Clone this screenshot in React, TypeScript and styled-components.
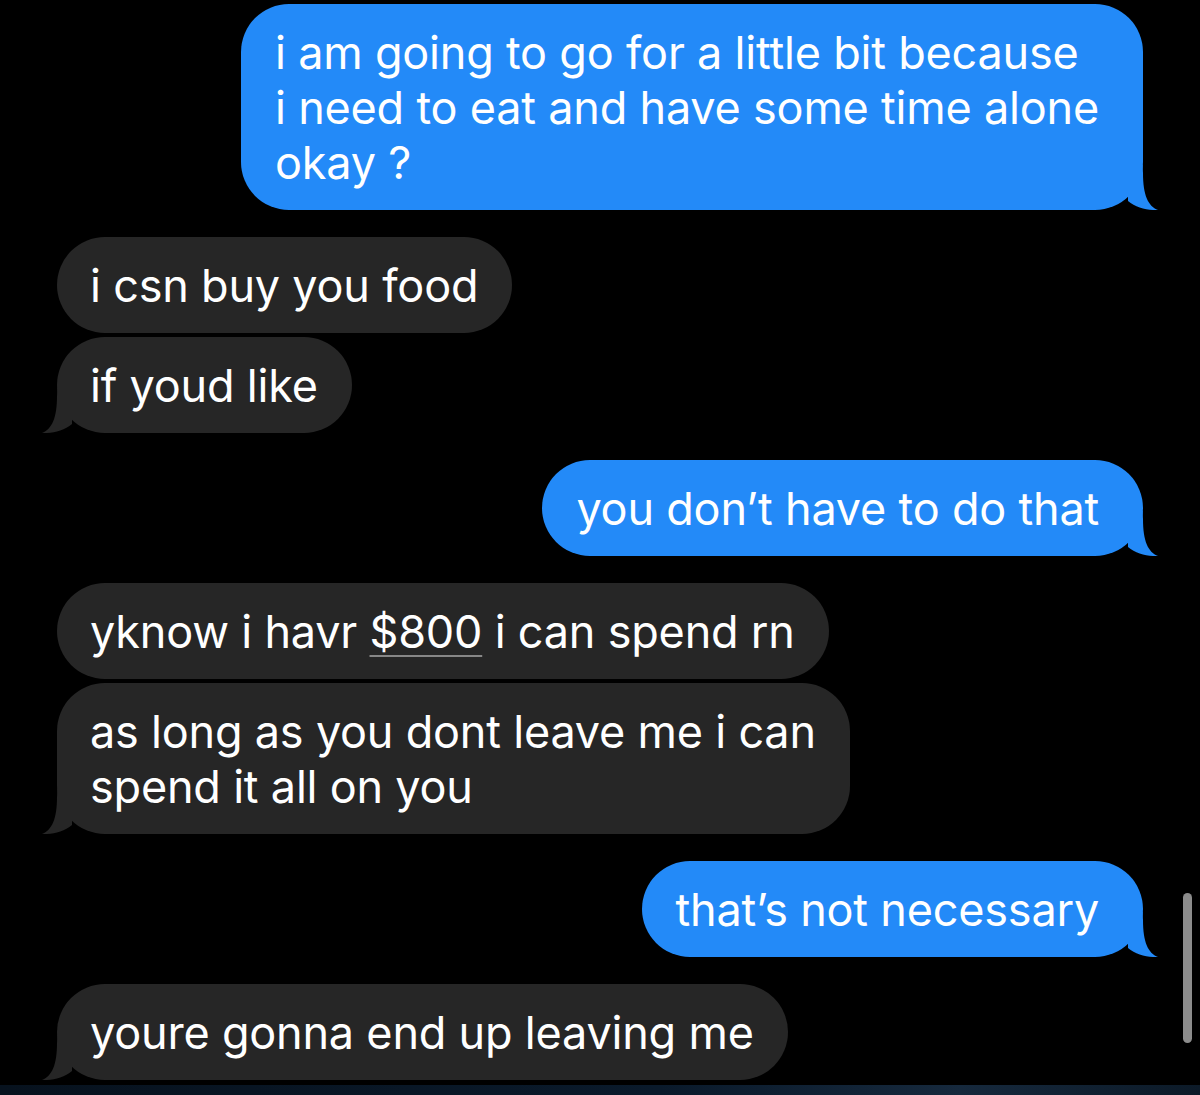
import React from "react";
import styled, { createGlobalStyle, css } from "styled-components";

const Global = createGlobalStyle`
  html, body {
    margin: 0;
    padding: 0;
    background: #000;
  }
  body {
    font-family: Inter, "Noto Sans", "Liberation Sans", sans-serif;
    -webkit-font-smoothing: antialiased;
  }
`;

type Side = "me" | "them";

const Screen = styled.div`
  position: relative;
  width: 1200px;
  height: 1095px;
  overflow: hidden;
  background: #000;
  display: flex;
  flex-direction: column;
`;

const Thread = styled.div`
  flex: 1;
  display: flex;
  flex-direction: column;
  gap: 27px;
  padding: 4px 57px 0 57px;
`;

const Group = styled.div<{ $side: Side }>`
  display: flex;
  flex-direction: column;
  gap: 4px;
  align-items: ${(p) => (p.$side === "me" ? "flex-end" : "flex-start")};
`;

const Bubble = styled.div<{ $side: Side }>`
  position: relative;
  box-sizing: border-box;
  border-radius: 48px;
  font-size: 45px;
  line-height: 55px;
  font-weight: 400;
  letter-spacing: -0.2px;
  color: #fff;
  white-space: nowrap;
  ${(p) =>
    p.$side === "me"
      ? css`
          background: #238af8;
          padding: 20.5px 44px 20.5px 34px;
        `
      : css`
          background: #262626;
          padding: 20.5px 34px 20.5px 33px;
        `}
`;

const TailWrap = styled.svg<{ $side: Side }>`
  position: absolute;
  bottom: 0;
  width: 45px;
  height: 45px;
  ${(p) =>
    p.$side === "me"
      ? css`
          right: -15px;
        `
      : css`
          left: -15px;
          transform: scaleX(-1);
        `}
`;

const Money = styled.span`
  text-decoration: underline;
  text-decoration-color: rgba(200, 200, 200, 0.6);
  text-decoration-thickness: 2px;
  text-underline-offset: 7px;
`;

const Scrollbar = styled.div`
  position: absolute;
  right: 8px;
  top: 893px;
  width: 9px;
  height: 150px;
  border-radius: 5px;
  background: #8c8c8c;
`;

const BottomBar = styled.div`
  height: 10px;
  margin-top: 5px;
  background: linear-gradient(90deg, #07121e 0%, #0a1a2b 55%, #16293d 80%, #0c1a28 100%);
`;

const Tail: React.FC<{ side: Side; color: string }> = ({ side, color }) => (
  <TailWrap $side={side} viewBox="0 0 45 45" aria-hidden>
    <path
      d="M29.5 0 L30 8 C30 30 35 41 45 45 C35 45.5 23 43 15 36 L15 0 Z"
      fill={color}
    />
  </TailWrap>
);

const Msg: React.FC<{ side: Side; tail?: boolean; children: React.ReactNode }> = ({
  side,
  tail,
  children,
}) => (
  <Bubble $side={side}>
    {children}
    {tail && <Tail side={side} color={side === "me" ? "#238af8" : "#262626"} />}
  </Bubble>
);

export default function App() {
  return (
    <Screen>
      <Global />
      <Thread>
        <Group $side="me">
          <Msg side="me" tail>
            i am going to go for a little bit because
            <br />
            i need to eat and have some time alone
            <br />
            okay ?
          </Msg>
        </Group>
        <Group $side="them">
          <Msg side="them">i csn buy you food</Msg>
          <Msg side="them" tail>
            if youd like
          </Msg>
        </Group>
        <Group $side="me">
          <Msg side="me" tail>
            you don’t have to do that
          </Msg>
        </Group>
        <Group $side="them">
          <Msg side="them">
            yknow i havr <Money>$800</Money> i can spend rn
          </Msg>
          <Msg side="them" tail>
            as long as you dont leave me i can
            <br />
            spend it all on you
          </Msg>
        </Group>
        <Group $side="me">
          <Msg side="me" tail>
            that’s not necessary
          </Msg>
        </Group>
        <Group $side="them">
          <Msg side="them" tail>
            youre gonna end up leaving me
          </Msg>
        </Group>
      </Thread>
      <BottomBar />
      <Scrollbar />
    </Screen>
  );
}
